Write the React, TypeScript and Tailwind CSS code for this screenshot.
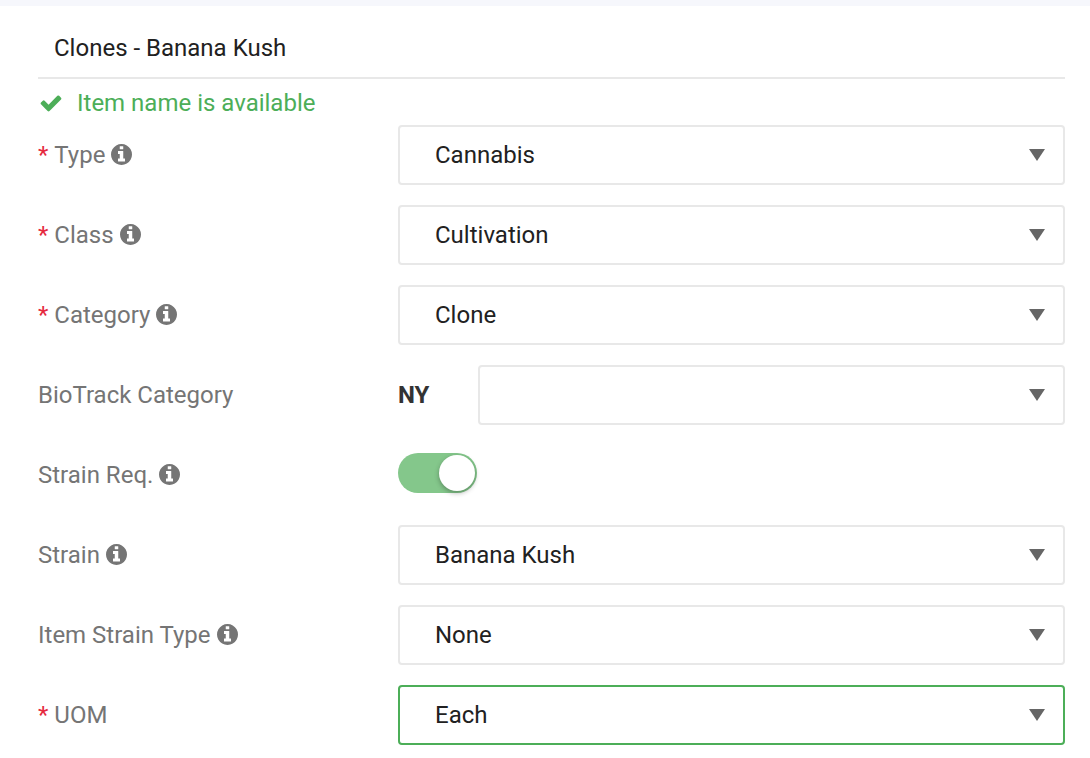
import React, { useState } from 'react';

type Field = {
  id: string;
  label: string;
  options: string[];
  required?: boolean;
  info?: boolean;
  region?: string;
  active?: boolean;
};

const ITEM_FIELDS: Field[] = [
  { id: 'type', label: 'Type', options: ['Cannabis'], required: true, info: true },
  { id: 'class', label: 'Class', options: ['Cultivation'], required: true, info: true },
  { id: 'category', label: 'Category', options: ['Clone'], required: true, info: true },
  { id: 'biotrack', label: 'BioTrack Category', options: [''], region: 'NY' },
];

const STRAIN_FIELDS: Field[] = [
  { id: 'strain', label: 'Strain', options: ['Banana Kush'], info: true },
  { id: 'strain-type', label: 'Item Strain Type', options: ['None'], info: true },
  { id: 'uom', label: 'UOM', options: ['Each'], required: true, active: true },
];

function CheckIcon() {
  return (
    <svg viewBox="0 0 1792 1792" className="size-6 shrink-0" fill="currentColor" aria-hidden="true">
      <path d="M1671 566q0 40-28 68l-724 724-136 136q-28 28-68 28t-68-28l-136-136-362-362q-28-28-28-68t28-68l136-136q28-28 68-28t68 28l294 295 656-657q28-28 68-28t68 28l136 136q28 28 28 68z" />
    </svg>
  );
}

function InfoIcon() {
  return (
    <svg viewBox="128 128 1536 1536" className="mb-0.5 size-[21px] shrink-0" fill="currentColor" aria-hidden="true">
      <path d="M1152 1376v-160q0-14-9-23t-23-9h-96v-512q0-14-9-23t-23-9h-320q-14 0-23 9t-9 23v160q0 14 9 23t23 9h96v320h-96q-14 0-23 9t-9 23v160q0 14 9 23t23 9h448q14 0 23-9t9-23zm-128-896v-160q0-14-9-23t-23-9h-192q-14 0-23 9t-9 23v160q0 14 9 23t23 9h192q14 0 23-9t9-23zm640 416q0 209-103 385.500t-279.500 279.500-385.500 103-385.500-103-279.500-279.500-103-385.500 103-385.500 279.500-279.500 385.500-103 385.500 103 279.500 279.500 103 385.500z" />
    </svg>
  );
}

function FieldLabel({ id, label, required, info }: Pick<Field, 'id' | 'label' | 'required' | 'info'>) {
  return (
    <label htmlFor={id} className="flex w-[360px] shrink-0 items-center gap-1.5 text-[#757575]">
      {required && <span className="text-[#e5293e]">*</span>}
      <span>{label}</span>
      {info && <InfoIcon />}
    </label>
  );
}

function SelectRow({ id, label, options, required, info, region, active }: Field) {
  return (
    <div className="flex items-center">
      <FieldLabel id={id} label={label} required={required} info={info} />
      {region && <span className="w-20 shrink-0 font-bold text-[#333333]">{region}</span>}
      <div className="relative min-w-0 flex-1">
        <select
          id={id}
          className={`block h-[60px] w-full appearance-none rounded-sm border-2 bg-white pr-12 pl-[35px] text-[#212121] outline-none ${
            active ? 'border-[#4cae58]' : 'border-[#e8e8e8]'
          }`}
        >
          {options.map(o => (
            <option key={o}>{o}</option>
          ))}
        </select>
        <svg
          viewBox="0 0 16 12"
          className="pointer-events-none absolute top-6 right-5 h-3 w-4"
          fill="#666666"
          aria-hidden="true"
        >
          <path d="M0 0h16L8 12z" />
        </svg>
      </div>
    </div>
  );
}

export default function App() {
  const [name, setName] = useState('Clones - Banana Kush');
  const [strainReq, setStrainReq] = useState(true);

  return (
    <div className="min-h-screen border-t-6 border-[#f6f7fc] bg-white pr-[25px] pl-[38px] font-[Roboto,sans-serif] text-2xl">
      <form>
        <input
          type="text"
          aria-label="Item name"
          value={name}
          onChange={e => setName(e.target.value)}
          className="mt-3 block h-[61px] w-full border-b-2 border-[#e8e8e8] px-4 text-[#212121] outline-none"
        />

        {/* name check */}
        <div className="flex h-[46px] items-center gap-3.5 pt-0.5 pl-px text-[#4cae58]">
          <CheckIcon />
          <span>Item name is available</span>
        </div>

        <div className="flex flex-col gap-5">
          {ITEM_FIELDS.map(f => (
            <SelectRow key={f.id} {...f} />
          ))}

          {/* strain toggle */}
          <div className="flex h-[60px]">
            <FieldLabel id="strain-req" label="Strain Req." info />
            <input
              id="strain-req"
              type="checkbox"
              role="switch"
              checked={strainReq}
              onChange={e => setStrainReq(e.target.checked)}
              className="mt-2 flex h-10 w-[79px] appearance-none items-center rounded-full bg-[#bdbdbd] px-0.5 before:size-9 before:rounded-full before:bg-white before:shadow-[0_2px_5px_rgba(0,0,0,0.3)] checked:justify-end checked:bg-[#84c78b]"
            />
          </div>

          {STRAIN_FIELDS.map(f => (
            <SelectRow key={f.id} {...f} />
          ))}
        </div>
      </form>
    </div>
  );
}
